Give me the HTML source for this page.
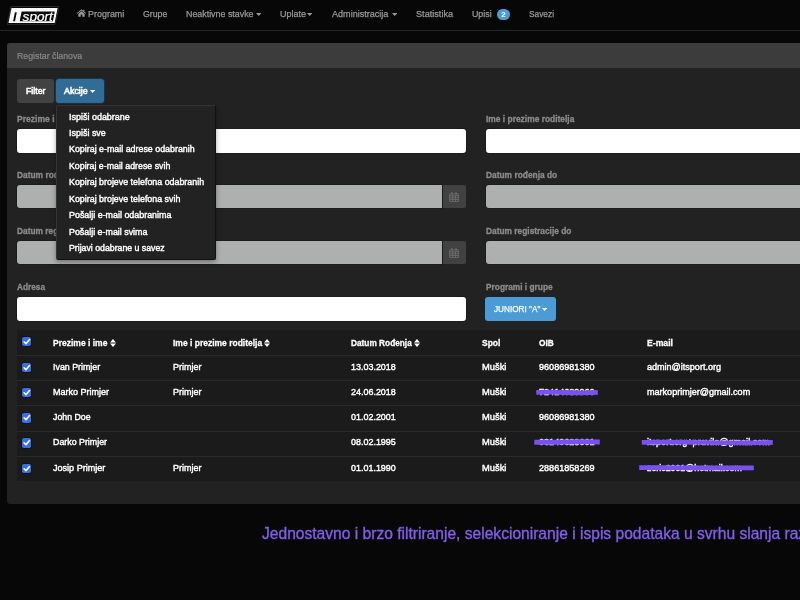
<!DOCTYPE html>
<html lang="hr">
<head>
<meta charset="utf-8">
<title>Registar članova</title>
<style>
*{box-sizing:border-box;margin:0;padding:0}
html,body{width:800px;height:600px;overflow:hidden;background:#070707;font-family:"Liberation Sans",sans-serif}
#root{position:absolute;left:0;top:0;width:800px;height:600px;overflow:hidden;background:#070707;will-change:transform}
.a{position:absolute;white-space:nowrap}
.t{position:absolute;white-space:nowrap;line-height:12px;font-size:9.6px;transform-origin:0 50%}
.nl{color:#9b9b9b;-webkit-text-stroke:.25px #9b9b9b}
.hd{color:#8a8a8a;-webkit-text-stroke:.2px #8a8a8a}
.w{color:#fff;-webkit-text-stroke:.42px #fff}
.b{font-weight:bold;font-size:9.9px;-webkit-text-stroke:.3px #fff}
.lbl{color:#8a8a8a;font-weight:bold;font-size:9.6px;-webkit-text-stroke:.35px #8a8a8a}
#nav{position:absolute;left:0;top:0;width:800px;height:30.8px;background:#070707;border-bottom:1px solid #252525}
#panel{position:absolute;left:7px;top:43px;width:800px;height:461px;background:#222;border-radius:3px 0 0 3px}
#phead{position:absolute;left:0;top:0;width:800px;height:25.4px;background:#3c3c3c;border-radius:3px 0 0 0}
.inp{position:absolute;height:24.2px;background:#fff;border-radius:3px;box-shadow:0 0 0 .6px #161616}
.inpg{position:absolute;height:23.4px;background:#adb0ae;border-radius:3px 0 0 3px;box-shadow:0 0 0 .6px #161616}
.addon{position:absolute;width:23.2px;height:23.4px;background:#414141;border-radius:0 2.2px 2.2px 0}
.btn{position:absolute;height:24px;border-radius:3px}
#menu{position:absolute;left:56.4px;top:104.5px;width:159.9px;height:155.5px;background:#222;border:1px solid #343434;border-right-color:#111;border-bottom-color:#111;border-radius:2.5px;box-shadow:0 2px 5px rgba(0,0,0,.35)}
#tbl{position:absolute;left:17px;top:330px;width:790px;height:151px;background:#1b1b1b}
.row{position:absolute;left:0;width:790px;height:1px;background:#292929}
.cb{position:absolute;left:4.9px;width:9.4px;height:9.4px;background:#366fe8;border-radius:1.8px;box-shadow:0 0 0 .7px #101010}
.cb svg{position:absolute;left:0;top:0}
#cap{position:absolute;left:262px;top:524px;font-size:16.4px;color:#845eef;-webkit-text-stroke:.35px #845eef;white-space:nowrap;line-height:18px;transform:scaleX(.951);transform-origin:0 50%}
</style>
</head>
<body>
<div id="root">

<div id="nav">
<svg class="a" style="left:7px;top:5px" width="52" height="20" viewBox="0 0 52 20">
<defs><clipPath id="lc"><polygon points="14.6,6.6 47.8,6.6 45.9,16.2 12.7,16.2"/></clipPath></defs>
<polygon points="4,1.6 52,1.6 48,19.4 0.2,19.4" fill="none" stroke="#3a3a3a" stroke-width=".7"/>
<polygon points="4.5,3 50.6,3 47.6,18 1.5,18" fill="#fff"/>
<polygon points="14.6,6.6 47.8,6.6 45.9,16.2 12.7,16.2" fill="#0a0a0a"/>
<polygon points="7.9,7.2 9.8,7.2 8,16.3 6.1,16.3" fill="#0a0a0a"/>
<text x="15.6" y="15.6" font-family="Liberation Sans, sans-serif" font-size="13.6" font-style="italic" fill="#fff" stroke="#fff" stroke-width=".25" textLength="30.2" lengthAdjust="spacingAndGlyphs" clip-path="url(#lc)">sport</text>
</svg>
<svg class="a" style="left:76.8px;top:9.1px" width="9" height="8" viewBox="0 0 9 8"><path d="M4.5 0.2 L0 4.1 L0.6 4.8 L4.5 1.5 L8.4 4.8 L9 4.1 L7.4 2.7 L7.4 0.7 L6.3 0.7 L6.3 1.8 Z M1.3 4.9 L4.5 2.2 L7.7 4.9 L7.7 7.8 L5.3 7.8 L5.3 5.5 L3.7 5.5 L3.7 7.8 L1.3 7.8 Z" fill="#9b9b9b"/></svg>
<div class="t nl" id="t0" style="left:87.7px;top:7.90px;transform:scaleX(0.9326);">Programi</div>
<div class="t nl" id="t1" style="left:142.7px;top:7.90px;transform:scaleX(0.9111);">Grupe</div>
<div class="t nl" id="t2" style="left:185.5px;top:7.90px;transform:scaleX(0.9239);">Neaktivne stavke</div>
<div class="t nl" id="t3" style="left:280.4px;top:7.90px;transform:scaleX(0.9375);">Uplate</div>
<div class="t nl" id="t4" style="left:332.0px;top:7.90px;transform:scaleX(0.9444);">Administracija</div>
<div class="t nl" id="t5" style="left:415.8px;top:7.90px;transform:scaleX(0.9528);">Statistika</div>
<div class="t nl" id="t6" style="left:472.1px;top:7.90px;transform:scaleX(0.9190);">Upisi</div>
<div class="t nl" id="t7" style="left:528.8px;top:7.90px;transform:scaleX(0.8681);">Savezi</div>
<svg class="a" style="left:256.4px;top:13.3px" width="5.4" height="3" viewBox="0 0 5.4 3"><polygon points="0,0 5.4,0 2.7,3" fill="#9b9b9b"/></svg>
<svg class="a" style="left:307.2px;top:13.3px" width="5.4" height="3" viewBox="0 0 5.4 3"><polygon points="0,0 5.4,0 2.7,3" fill="#9b9b9b"/></svg>
<svg class="a" style="left:391.8px;top:13.3px" width="5.4" height="3" viewBox="0 0 5.4 3"><polygon points="0,0 5.4,0 2.7,3" fill="#9b9b9b"/></svg>
<div class="a" style="left:496.8px;top:9.2px;width:13.2px;height:11px;border-radius:5.5px;background:#4a9bd6;color:#fff;font-size:8px;font-weight:bold;line-height:11px;text-align:center">2</div>
</div>
<div id="panel"><div id="phead"></div></div>
<div class="t hd" id="t8" style="left:17.3px;top:50.30px;transform:scaleX(0.9123);">Registar članova</div>
<div class="btn" style="left:17px;top:78.8px;width:37px;background:#424242"></div>
<div class="t w" id="t9" style="left:25.5px;top:84.50px;transform:scaleX(0.9143);-webkit-text-stroke:.6px #fff;">Filter</div>
<div class="btn" style="left:56px;top:78.8px;width:48px;background:#316c97;box-shadow:0 0 0 .6px #1c3f5c"></div>
<div class="t w" id="t10" style="left:64.1px;top:84.50px;transform:scaleX(0.9299);-webkit-text-stroke:.6px #fff;">Akcije</div>
<svg class="a" style="left:90px;top:90.3px" width="5.2" height="3" viewBox="0 0 5.2 3"><polygon points="0,0 5.2,0 2.6,3" fill="#fff"/></svg>
<div class="t lbl" id="t11" style="left:17.2px;top:113.40px;transform:scaleX(0.8903);">Prezime i ime</div>
<div class="t lbl" id="t12" style="left:485.8px;top:113.40px;transform:scaleX(0.8771);">Ime i prezime roditelja</div>
<div class="inp" style="left:17px;top:128.6px;width:449px"></div>
<div class="inp" style="left:485.8px;top:128.6px;width:330px"></div>
<div class="t lbl" id="t13" style="left:17.2px;top:168.80px;transform:scaleX(0.8730);">Datum rođenja od</div>
<div class="t lbl" id="t14" style="left:485.8px;top:168.80px;transform:scaleX(0.8730);">Datum rođenja do</div>
<div class="inpg" style="left:17px;top:185px;width:425px"></div><div class="addon" style="left:442.8px;top:185px"><svg class="a" style="left:6.4px;top:6.6px" width="10" height="10" viewBox="0 0 10 10"><path d="M0.6 1.9h8.8v7.5h-8.8z M0.6 3.8h8.8 M3.5 3.8v5.6 M6.5 3.8v5.6 M0.6 5.7h8.8 M0.6 7.5h8.8" fill="none" stroke="#6c6c6c" stroke-width="0.9"/><path d="M2.2 0.3h1.5v2.2h-1.5z M6.3 0.3h1.5v2.2h-1.5z" fill="#6c6c6c"/></svg></div>
<div class="inpg" style="left:485.8px;top:185px;width:330px"></div>
<div class="t lbl" id="t15" style="left:17.2px;top:224.80px;transform:scaleX(0.8715);">Datum registracije od</div>
<div class="t lbl" id="t16" style="left:485.8px;top:224.80px;transform:scaleX(0.8710);">Datum registracije do</div>
<div class="inpg" style="left:17px;top:241.1px;width:425px"></div><div class="addon" style="left:442.8px;top:241.1px"><svg class="a" style="left:6.4px;top:6.6px" width="10" height="10" viewBox="0 0 10 10"><path d="M0.6 1.9h8.8v7.5h-8.8z M0.6 3.8h8.8 M3.5 3.8v5.6 M6.5 3.8v5.6 M0.6 5.7h8.8 M0.6 7.5h8.8" fill="none" stroke="#6c6c6c" stroke-width="0.9"/><path d="M2.2 0.3h1.5v2.2h-1.5z M6.3 0.3h1.5v2.2h-1.5z" fill="#6c6c6c"/></svg></div>
<div class="inpg" style="left:485.8px;top:241.1px;width:330px"></div>
<div class="t lbl" id="t17" style="left:17.2px;top:280.80px;transform:scaleX(0.8607);">Adresa</div>
<div class="t lbl" id="t18" style="left:485.8px;top:280.80px;transform:scaleX(0.8676);">Programi i grupe</div>
<div class="inp" style="left:17px;top:296.7px;width:449px"></div>
<div class="btn" style="left:484.8px;top:296.5px;width:71.2px;height:24.3px;background:#4a9bd6"></div>
<div class="t w" id="t19" style="left:493.6px;top:302.60px;transform:scaleX(0.8551);-webkit-text-stroke:.25px #fff;">JUNIORI "A"</div>
<svg class="a" style="left:542.2px;top:308px" width="5.2" height="3" viewBox="0 0 5.2 3"><polygon points="0,0 5.2,0 2.6,3" fill="#fff"/></svg>
<div id="menu">
<div class="t w" id="t20" style="left:11.9px;top:5.00px;transform:scaleX(0.9343);">Ispiši odabrane</div>
<div class="t w" id="t21" style="left:11.9px;top:21.47px;transform:scaleX(0.9328);">Ispiši sve</div>
<div class="t w" id="t22" style="left:11.9px;top:37.94px;transform:scaleX(0.9243);">Kopiraj e-mail adrese odabranih</div>
<div class="t w" id="t23" style="left:11.9px;top:54.41px;transform:scaleX(0.9178);">Kopiraj e-mail adrese svih</div>
<div class="t w" id="t24" style="left:11.9px;top:70.88px;transform:scaleX(0.9244);">Kopiraj brojeve telefona odabranih</div>
<div class="t w" id="t25" style="left:11.9px;top:87.35px;transform:scaleX(0.9242);">Kopiraj brojeve telefona svih</div>
<div class="t w" id="t26" style="left:11.9px;top:103.82px;transform:scaleX(0.9276);">Pošalji e-mail odabranima</div>
<div class="t w" id="t27" style="left:11.9px;top:120.29px;transform:scaleX(0.9249);">Pošalji e-mail svima</div>
<div class="t w" id="t28" style="left:11.9px;top:136.76px;transform:scaleX(0.9109);">Prijavi odabrane u savez</div>
</div>
<div id="tbl">
<div class="row" style="top:25.2px"></div>
<div class="row" style="top:50.3px"></div>
<div class="row" style="top:75.4px"></div>
<div class="row" style="top:100.5px"></div>
<div class="row" style="top:125.6px"></div>
<div class="cb" style="top:7.1px"><svg width="9.4" height="9.4" viewBox="0 0 9 9"><path d="M2 4.6 L3.8 6.4 L7.2 2.4" fill="none" stroke="#fff" stroke-width="1.5" stroke-linecap="round" stroke-linejoin="round"/></svg></div>
<div class="cb" style="top:32.9px"><svg width="9.4" height="9.4" viewBox="0 0 9 9"><path d="M2 4.6 L3.8 6.4 L7.2 2.4" fill="none" stroke="#fff" stroke-width="1.5" stroke-linecap="round" stroke-linejoin="round"/></svg></div>
<div class="cb" style="top:58.1px"><svg width="9.4" height="9.4" viewBox="0 0 9 9"><path d="M2 4.6 L3.8 6.4 L7.2 2.4" fill="none" stroke="#fff" stroke-width="1.5" stroke-linecap="round" stroke-linejoin="round"/></svg></div>
<div class="cb" style="top:83.2px"><svg width="9.4" height="9.4" viewBox="0 0 9 9"><path d="M2 4.6 L3.8 6.4 L7.2 2.4" fill="none" stroke="#fff" stroke-width="1.5" stroke-linecap="round" stroke-linejoin="round"/></svg></div>
<div class="cb" style="top:108.4px"><svg width="9.4" height="9.4" viewBox="0 0 9 9"><path d="M2 4.6 L3.8 6.4 L7.2 2.4" fill="none" stroke="#fff" stroke-width="1.5" stroke-linecap="round" stroke-linejoin="round"/></svg></div>
<div class="cb" style="top:133.5px"><svg width="9.4" height="9.4" viewBox="0 0 9 9"><path d="M2 4.6 L3.8 6.4 L7.2 2.4" fill="none" stroke="#fff" stroke-width="1.5" stroke-linecap="round" stroke-linejoin="round"/></svg></div>
<div class="t w b" id="t29" style="left:35.8px;top:7.00px;transform:scaleX(0.8618);">Prezime i ime</div>
<div class="t w b" id="t30" style="left:155.8px;top:7.00px;transform:scaleX(0.8599);">Ime i prezime roditelja</div>
<div class="t w b" id="t31" style="left:333.8px;top:7.00px;transform:scaleX(0.8393);">Datum Rođenja</div>
<div class="t w b" id="t32" style="left:465.0px;top:7.00px;transform:scaleX(0.8596);">Spol</div>
<div class="t w b" id="t33" style="left:521.8px;top:7.00px;transform:scaleX(0.8427);">OIB</div>
<div class="t w b" id="t34" style="left:630.2px;top:7.00px;transform:scaleX(0.8772);">E-mail</div>
<svg class="a" style="left:92.8px;top:9.199999999999989px" width="6" height="8" viewBox="0 0 6 8"><polygon points="0,3.4 6,3.4 3,0" fill="#fff"/><polygon points="0,4.6 6,4.6 3,8" fill="#fff"/></svg>
<svg class="a" style="left:247.2px;top:9.199999999999989px" width="6" height="8" viewBox="0 0 6 8"><polygon points="0,3.4 6,3.4 3,0" fill="#fff"/><polygon points="0,4.6 6,4.6 3,8" fill="#fff"/></svg>
<svg class="a" style="left:397.1px;top:9.199999999999989px" width="6" height="8" viewBox="0 0 6 8"><polygon points="0,3.4 6,3.4 3,0" fill="#fff"/><polygon points="0,4.6 6,4.6 3,8" fill="#fff"/></svg>
<div class="t w" id="t35" style="left:35.8px;top:31.00px;transform:scaleX(0.9221);">Ivan Primjer</div>
<div class="t w" id="t36" style="left:155.8px;top:31.00px;transform:scaleX(0.9345);">Primjer</div>
<div class="t w" id="t37" style="left:333.8px;top:31.00px;transform:scaleX(0.9330);">13.03.2018</div>
<div class="t w" id="t38" style="left:465.0px;top:31.00px;transform:scaleX(0.9736);">Muški</div>
<div class="t w" id="t39" style="left:521.8px;top:31.00px;transform:scaleX(0.9471);">96086981380</div>
<div class="t w" id="t40" style="left:630.2px;top:31.00px;transform:scaleX(0.9423);">admin@itsport.org</div>
<div class="t w" id="t41" style="left:35.8px;top:56.00px;transform:scaleX(0.9380);">Marko Primjer</div>
<div class="t w" id="t42" style="left:155.8px;top:56.00px;transform:scaleX(0.9345);">Primjer</div>
<div class="t w" id="t43" style="left:333.8px;top:56.00px;transform:scaleX(0.9330);">24.06.2018</div>
<div class="t w" id="t44" style="left:465.0px;top:56.00px;transform:scaleX(0.9736);">Muški</div>
<div class="t w" id="t45" style="left:521.8px;top:56.00px;transform:scaleX(0.9471);">72414689960</div>
<div class="t w" id="t46" style="left:630.2px;top:56.00px;transform:scaleX(0.9430);">markoprimjer@gmail.com</div>
<div class="t w" id="t47" style="left:35.8px;top:81.00px;transform:scaleX(0.9153);">John Doe</div>
<div class="t w" id="t48" style="left:333.8px;top:81.00px;transform:scaleX(0.9330);">01.02.2001</div>
<div class="t w" id="t49" style="left:465.0px;top:81.00px;transform:scaleX(0.9736);">Muški</div>
<div class="t w" id="t50" style="left:521.8px;top:81.00px;transform:scaleX(0.9471);">96086981380</div>
<div class="t w" id="t51" style="left:35.8px;top:106.00px;transform:scaleX(0.9209);">Darko Primjer</div>
<div class="t w" id="t52" style="left:333.8px;top:106.00px;transform:scaleX(0.9330);">08.02.1995</div>
<div class="t w" id="t53" style="left:465.0px;top:106.00px;transform:scaleX(0.9736);">Muški</div>
<div class="t w" id="t54" style="left:521.8px;top:106.00px;transform:scaleX(0.9471);">03149628001</div>
<div class="t w" id="t55" style="left:630.2px;top:106.00px;transform:scaleX(0.9447);">itsport.org+pravila@gmail.com</div>
<div class="t w" id="t56" style="left:35.8px;top:132.00px;transform:scaleX(0.9449);">Josip Primjer</div>
<div class="t w" id="t57" style="left:155.8px;top:132.00px;transform:scaleX(0.9345);">Primjer</div>
<div class="t w" id="t58" style="left:333.8px;top:132.00px;transform:scaleX(0.9330);">01.01.1990</div>
<div class="t w" id="t59" style="left:465.0px;top:132.00px;transform:scaleX(0.9736);">Muški</div>
<div class="t w" id="t60" style="left:521.8px;top:132.00px;transform:scaleX(0.9471);">28861858269</div>
<div class="t w" id="t61" style="left:630.2px;top:132.00px;transform:scaleX(0.9198);">zoric2001@hotmail.com</div>
<svg class="a" style="left:0;top:0;overflow:visible" width="1" height="1"><path d="M519.3 62.3 Q534.7 61.9 550.0 62.5 T580.8 62.4" fill="none" stroke="#7a50f3" stroke-width="4.8" stroke-linecap="butt"/></svg>
<svg class="a" style="left:0;top:0;overflow:visible" width="1" height="1"><path d="M517.3 112.2 Q533.7 112.5 550.0 112.0 T582.8 112.1" fill="none" stroke="#7a50f3" stroke-width="5.0" stroke-linecap="butt"/></svg>
<svg class="a" style="left:0;top:0;overflow:visible" width="1" height="1"><path d="M624.8 112.3 Q657.5 112.0 690.3 112.5 T755.8 112.4" fill="none" stroke="#7a50f3" stroke-width="4.7" stroke-linecap="butt"/></svg>
<svg class="a" style="left:0;top:0;overflow:visible" width="1" height="1"><path d="M622.2 137.7 Q650.9 137.5 679.5 137.8 T736.8 137.8" fill="none" stroke="#7a50f3" stroke-width="4.7" stroke-linecap="butt"/></svg>
</div>
<div id="cap">Jednostavno i brzo filtriranje, selekcioniranje i ispis podataka u svrhu slanja različitih obavijesti članovima</div>
</div>
</body>
</html>
